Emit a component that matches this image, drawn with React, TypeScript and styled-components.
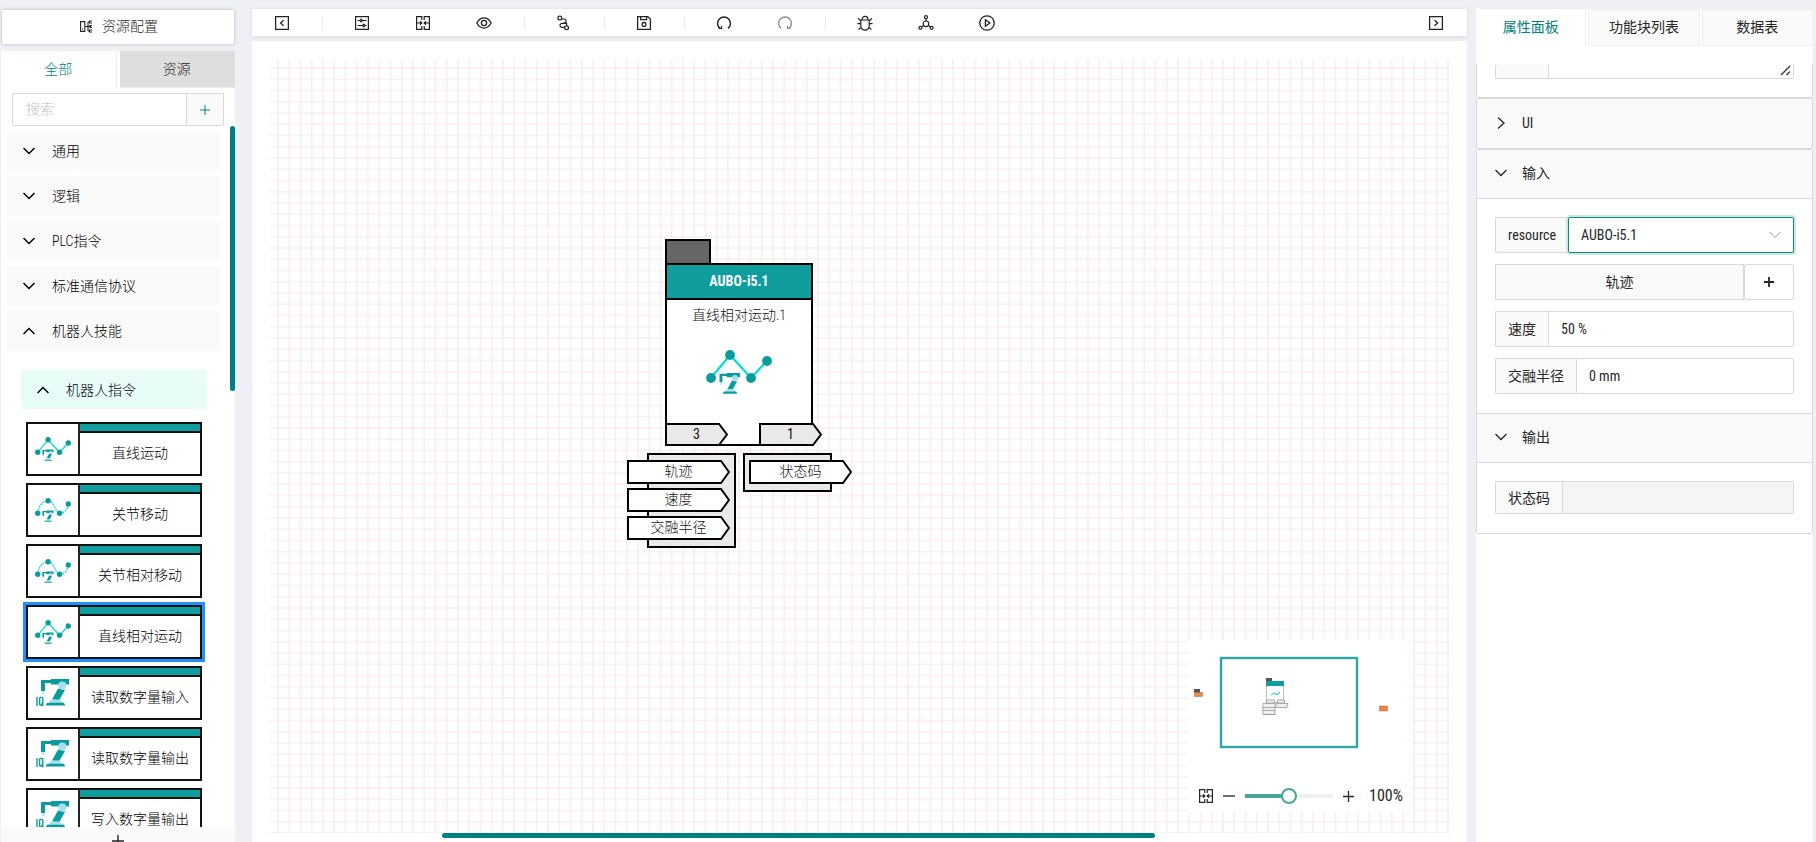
import React from 'react';
import styled, { createGlobalStyle } from 'styled-components';

const teal = '#008080';
const nodeTeal = '#0f9d9d';
const line = '#d9d9d9';
const ink = '#262626';
const sans = '"Roboto Condensed", "Liberation Sans Narrow", "Noto Sans CJK SC", sans-serif';

const GlobalStyle = createGlobalStyle`
  *, *::before, *::after { box-sizing: border-box; }
  body { margin: 0; background: #eff0f5; color: ${ink}; font: 14px/22px ${sans}; overflow: hidden; }
  button, input, select, textarea { font: inherit; color: inherit; margin: 0; }
  button { padding: 0; border: 0; background: none; cursor: pointer; }
  svg { display: block; flex: none; }
`;

/* ---------- page frame ---------- */

const Page = styled.div`
  display: flex;
  height: 100vh;
  padding: 9px 3px 0 1px;
`;

const Sidebar = styled.aside`
  display: flex;
  flex-direction: column;
  flex: none;
  width: 234px;
  margin-right: 17px;
  font-weight: 300;
`;

const Workspace = styled.main`
  display: flex;
  flex-direction: column;
  flex: 1;
  min-width: 0;
  gap: 5px;
  margin-right: 9px;
`;

const Inspector = styled.aside`
  display: flex;
  flex-direction: column;
  flex: none;
  width: 337px;
  background: #fff;
`;

/* ---------- sidebar ---------- */

const ConfigButton = styled.button`
  display: flex;
  align-items: center;
  justify-content: center;
  gap: 9px;
  height: 34px;
  margin: 1px 1px 7px;
  padding: 0 0 2px 2px;
  border-radius: 2px;
  background: #fff;
  box-shadow: 0 0 4px #b9bcc2;
`;

const SideTabs = styled.div`
  display: flex;
  gap: 3px;
  flex: none;
  background: #fff;
`;

const SideTab = styled.button<{ $active?: boolean }>`
  flex: 1;
  height: 37px;
  color: ${p => (p.$active ? teal : ink)};
  background: ${p => (p.$active ? '#fff' : '#dedede')};
  border-right: 1px solid ${p => (p.$active ? '#ececec' : '#dedede')};
  border-bottom: 1px solid ${p => (p.$active ? '#fff' : '#ececec')};
`;

const SideBody = styled.div`
  display: flex;
  flex-direction: column;
  flex: 1;
  min-height: 0;
  padding-top: 5px;
  background: #fff;
`;

const SearchBar = styled.div`
  display: flex;
  flex: none;
  height: 33px;
  margin: 0 11px;
`;

const SearchInput = styled.input`
  flex: 1;
  min-width: 0;
  padding: 0 13px 2px;
  border: 1px solid ${line};
  border-radius: 2px 0 0 2px;
  background: #fff;
  outline: none;
  &::placeholder { color: #bfbfbf; opacity: 1; }
`;

const AddButton = styled.button`
  display: grid;
  place-items: center;
  width: 37px;
  border: 1px solid ${line};
  border-left: 0;
  border-radius: 0 2px 2px 0;
  background: #fafafa;
  color: ${teal};
`;

const LibraryScroll = styled.div`
  display: flex;
  flex: 1;
  min-height: 0;
  overflow: hidden;
`;

const Library = styled.nav`
  flex: 1;
  min-width: 0;
  padding: 5px 9px 0 6px;
`;

const ScrollThumb = styled.div`
  flex: none;
  width: 5px;
  height: 265px;
  border-radius: 3px;
  background: ${teal};
`;

const Group = styled.button<{ $nested?: boolean }>`
  display: flex;
  align-items: center;
  gap: 17px;
  width: 100%;
  height: ${p => (p.$nested ? 39 : 40)}px;
  margin-bottom: 5px;
  padding-left: 16px;
  background: ${p => (p.$nested ? '#e8fdf8' : '#fafafa')};
  color: #000;
`;

const NestedGroup = styled.div`
  padding: 14px 14px 0;
`;

const BlockList = styled.ul`
  display: flex;
  flex-direction: column;
  gap: 7px;
  margin: 13px 5px 0;
  padding: 0;
  list-style: none;
`;

const Block = styled.button<{ $selected?: boolean }>`
  display: flex;
  width: 100%;
  height: 54px;
  border: 2px solid #111;
  background: #fff;
  color: #000;
  box-shadow: ${p => (p.$selected ? '0 0 0 3px #1e90ff' : 'none')};
`;

const BlockIcon = styled.span`
  display: grid;
  place-items: center;
  width: 52px;
  height: 100%;
  border-right: 2px solid #222;
`;

const BlockName = styled.span`
  display: flex;
  align-items: center;
  justify-content: center;
  flex: 1;
  height: 100%;
  padding-top: 8px;
  background: linear-gradient(${nodeTeal} 7px, #111 7px, #111 9px, #fff 9px);
`;

const SideFooter = styled.button`
  display: flex;
  justify-content: center;
  flex: none;
  height: 15px;
  padding-top: 8px;
  overflow: hidden;
  background: #fafafa;
`;

/* ---------- toolbar and canvas ---------- */

const Toolbar = styled.div`
  display: flex;
  align-items: center;
  flex: none;
  height: 27px;
  background: #fff;
  box-shadow: 0 1px 4px #d5d9e0;
`;

const Tool = styled.button<{ $faded?: boolean }>`
  display: flex;
  align-items: center;
  width: 61px;
  height: 27px;
  padding-left: 22px;
  color: #222;
  opacity: ${p => (p.$faded ? 0.5 : 1)};
`;

const ToolDivider = styled.span`
  width: 1px;
  height: 14px;
  margin: 0 9px;
  background: #ebebeb;
`;

const Spacer = styled.span`
  flex: 1;
`;

const Canvas = styled.section`
  position: relative;
  display: flex;
  flex-direction: column;
  flex: 1;
  min-height: 0;
  padding: 18px 18px 0;
  background: #fff;
`;

const Grid = styled.svg`
  width: 100%;
  flex: 1;
  min-height: 0;
`;

const BottomTrack = styled.div`
  display: flex;
  justify-content: center;
  flex: none;
  height: 9px;
  padding-right: 122px;
`;

const BottomThumb = styled.div`
  width: 713px;
  height: 5px;
  border-radius: 3px;
  background: ${teal};
`;

const NodeLayer = styled.div<{ $x: number; $y: number }>`
  position: absolute;
  left: ${p => p.$x}px;
  top: ${p => p.$y}px;
  color: #111;
`;

const NodeTag = styled.div`
  width: 46px;
  height: 26px;
  margin: 0 0 -2px 38px;
  border: 2px solid #000;
  background: #666;
`;

const NodeCard = styled.div`
  display: flex;
  flex-direction: column;
  width: 148px;
  height: 183px;
  margin-left: 38px;
  border: 2px solid #000;
  background: #fff;
  text-align: center;
`;

const NodeTitle = styled.div`
  height: 35px;
  border-bottom: 2px solid #000;
  background: ${nodeTeal};
  color: #fff;
  font-weight: 700;
  line-height: 32px;
`;

const NodeBody = styled.div`
  display: flex;
  flex-direction: column;
  align-items: center;
  flex: 1;
  gap: 24px;
  padding-top: 4px;
  font-weight: 300;
`;

const NodeCounts = styled.div`
  display: flex;
  gap: 31px;
  width: 156px;
  margin: -23px 0 7px 38px;
`;

const PortColumns = styled.div`
  display: flex;
  align-items: flex-start;
  font-weight: 300;
`;

const PortGroup = styled.div<{ $side: 'in' | 'out' }>`
  display: flex;
  flex-direction: column;
  gap: 4px;
  width: 89px;
  margin-left: ${p => (p.$side === 'in' ? 20 : 7)}px;
  padding: 5px 0 6px ${p => (p.$side === 'in' ? 0 : 4)}px;
  border: 2px solid #000;
  background: #ebe8e9;
`;

const PortShape = styled.div<{ $w: number; $pull?: boolean }>`
  position: relative;
  flex: none;
  width: ${p => p.$w}px;
  height: ${p => (p.$w > 80 ? 24 : 23)}px;
  margin-left: ${p => (p.$pull ? -22 : 0)}px;
  line-height: 22px;
  text-align: center;
  svg { position: absolute; inset: 0; }
  span { position: relative; }
`;

/* ---------- minimap ---------- */

const Minimap = styled.div`
  position: absolute;
  right: 54px;
  bottom: 30px;
  display: flex;
  flex-direction: column;
  justify-content: space-between;
  width: 225px;
  height: 172px;
  background: #fff;
`;

const ZoomBar = styled.div`
  display: flex;
  align-items: center;
  height: 22px;
  margin-bottom: 5px;
  padding-left: 10px;
  font-size: 16px;
`;

const ZoomButton = styled.button`
  display: grid;
  place-items: center;
  width: 14px;
  height: 18px;
  margin-left: 8px;
`;

const ZoomSlider = styled.input`
  appearance: none;
  width: 88px;
  height: 16px;
  margin: 0 0 0 9px;
  background: linear-gradient(90deg, #4aa59b 50%, #f0f0f0 50%) center / 100% 4px no-repeat;
  &::-webkit-slider-thumb {
    appearance: none;
    width: 16px;
    height: 16px;
    border: 2px solid #4aa59b;
    border-radius: 50%;
    background: #fff;
  }
`;

const ZoomValue = styled.output`
  margin-left: 14px;
`;

/* ---------- inspector ---------- */

const PanelTabs = styled.div`
  display: flex;
  gap: 2px;
  flex: none;
`;

const PanelTab = styled.button<{ $active?: boolean }>`
  flex: 1;
  height: 37px;
  padding-bottom: 2px;
  border: 1px solid #f0f0f0;
  border-width: ${p => (p.$active ? '0 1px 0 0' : '1px')};
  background: ${p => (p.$active ? '#fff' : '#fafafa')};
  color: ${p => (p.$active ? teal : ink)};
`;

const PanelScroll = styled.div`
  flex: 1;
  min-height: 0;
  margin-top: 18px;
  overflow: hidden;
`;

const Panel = styled.section<{ $cut?: boolean }>`
  border: 1px solid ${line};
  border-top-width: ${p => (p.$cut ? 0 : 1)}px;
  border-radius: ${p => (p.$cut ? '0 0 2px 2px' : '2px')};
`;

const PanelHead = styled.button<{ $open?: boolean }>`
  display: flex;
  align-items: center;
  gap: 15px;
  width: 100%;
  height: 49px;
  padding: 0 18px 2px;
  border-bottom: ${p => (p.$open ? `1px solid ${line}` : 0)};
  background: #fafafa;
`;

const PanelRule = styled.hr`
  height: 1px;
  margin: 0;
  border: 0;
  background: ${line};
`;

const Fields = styled.div`
  display: flex;
  flex-direction: column;
  gap: 11px;
  padding: 18px 18px 19px;
`;

const CutFields = styled(Fields)`
  padding: 0 18px 18px;
`;

const Field = styled.div<{ $h?: number }>`
  position: relative;
  display: flex;
  height: ${p => p.$h ?? 36}px;
`;

const FieldLabel = styled.label<{ $cut?: boolean }>`
  display: flex;
  align-items: center;
  flex: none;
  min-width: 53px;
  padding: 0 12px;
  border: 1px solid ${line};
  border-right: 0;
  border-top-width: ${p => (p.$cut ? 0 : 1)}px;
  border-radius: 2px 0 0 2px;
  background: #fafafa;
`;

const FieldInput = styled.input`
  flex: 1;
  min-width: 0;
  padding: 0 12px;
  border: 1px solid ${line};
  border-radius: 0 2px 2px 0;
  background: #fff;
  outline: none;
  &:disabled { background: #f5f5f5; }
`;

const FieldArea = styled.textarea`
  flex: 1;
  min-width: 0;
  padding: 0;
  border: 1px solid ${line};
  border-top: 0;
  border-radius: 0 0 2px 0;
  resize: none;
  outline: none;
`;

const FieldSelect = styled.select`
  flex: 1;
  min-width: 0;
  padding: 0 12px;
  appearance: none;
  border: 1px solid #0d8a7f;
  border-radius: 2px;
  background: #fff;
  box-shadow: 0 0 0 2px #cde8e5;
  outline: none;
`;

const SelectArrow = styled.span`
  position: absolute;
  right: 13px;
  top: 12px;
  color: #bfbfbf;
  pointer-events: none;
`;

const AreaGrip = styled.span`
  position: absolute;
  right: 3px;
  bottom: 3px;
  color: #444;
  pointer-events: none;
`;

const TrackName = styled.div`
  flex: 1;
  border: 1px solid ${line};
  background: #fafafa;
  line-height: 34px;
  text-align: center;
`;

const TrackAdd = styled.button`
  display: grid;
  place-items: center;
  width: 50px;
  border: 1px solid ${line};
  border-radius: 2px;
  background: #fff;
`;

/* ---------- drawings ---------- */

type IconProps = { size?: number; w?: number; children: React.ReactNode };

const Icon = ({ size = 16, w = 1.3, children }: IconProps) => (
  <svg width={size} height={size} viewBox="0 0 16 16" fill="none" stroke="currentColor" strokeWidth={w}>
    {children}
  </svg>
);

const Chevron = ({ dir, w = 1.5 }: { dir: 'up' | 'down' | 'right'; w?: number }) => (
  <svg width="12" height="12" viewBox="0 0 12 12" fill="none" stroke="currentColor" strokeWidth={w}>
    <path d={{ up: 'M.5 9 6 3.5 11.5 9', down: 'M.5 3 6 8.5 11.5 3', right: 'M3 .5 9 6 3 11.5' }[dir]} />
  </svg>
);

const Plus = ({ size = 10, w = 1 }: { size?: number; w?: number }) => (
  <svg width={size} height={size} viewBox={`0 0 ${size} ${size}`} stroke="currentColor" strokeWidth={w}>
    <path d={`M${size / 2} 0V${size}M0 ${size / 2}H${size}`} />
  </svg>
);

const TreeIcon = () => (
  <svg width="13" height="13" viewBox="0 0 13 13" fill="none" stroke="currentColor" strokeWidth="1.1">
    <path d="M.6 1.6h4.2v9.8H.6zM2 9h1M5 6.5h6M8 2v9M8 2h1M8 11h1M12 1H9.5v2H12M12 5.5H10v2h2M12 10H9.5v2H12" />
  </svg>
);

const SquareLeft = () => (
  <Icon><path d="M1.6 1.6h12.8v12.8H1.6zM9.6 5.2 6.6 8l3 2.8" /></Icon>
);
const SquareRight = () => (
  <Icon><path d="M1.6 1.6h12.8v12.8H1.6zM6.6 5.2l3 2.8-3 2.8" /></Icon>
);
const Sliders = () => (
  <Icon w={1.2}>
    <path d="M1.6 1.6h12.8v12.8H1.6zM3.5 5.5H6M8.5 5.5h4M3.5 10.5h5M11 10.5h1.5M7.2 4.2 8.5 5.5 7.2 6.8 5.9 5.5zM9.8 9.2l1.3 1.3-1.3 1.3-1.3-1.3z" />
  </Icon>
);
const FitView = () => (
  <Icon w={1.2}>
    <path d="M6.8 5V1.6H1.6v12.8h5.2V11M9.2 5V1.6h5.2v12.8H9.2V11M1.6 8h4.8M14.4 8H9.6M5 6.3 6.8 8 5 9.7M11 6.3 9.2 8l1.8 1.7" />
  </Icon>
);
const Eye = () => (
  <Icon>
    <path d="M.9 8C2.6 4.6 5.1 2.9 8 2.9S13.4 4.6 15.1 8C13.4 11.4 10.9 13.1 8 13.1S2.6 11.4.9 8z" />
    <circle cx="8" cy="8" r="2.6" />
  </Icon>
);
const Route = () => (
  <Icon w={1.2}>
    <circle cx="3.8" cy="3" r="1.9" />
    <circle cx="10.6" cy="12.8" r="1.9" />
    <path d="M5.7 4h2.6a2 2 0 0 1 1.4 3.2L7 8.6a2 2 0 0 0-3 2c0 1 .8 1.8 1.8 1.8h2.9M5.6 8.4h5v2.4" />
  </Icon>
);
const Save = () => (
  <Icon>
    <path d="M1.6 1.6h10.2l2.6 2.6v10.2H1.6zM4.6 1.6v3h6v-3" />
    <circle cx="8" cy="9.4" r="1.9" />
  </Icon>
);
const Undo = () => (
  <Icon w={1.4}>
    <path d="M4 13.4A6.4 6.4 0 1 1 12 13.4" />
    <path d="M2.6 13.4h3V11" strokeWidth="1.1" />
  </Icon>
);
const Redo = () => (
  <Icon w={1.4}>
    <path d="M4 13.4A6.4 6.4 0 1 1 12 13.4" />
    <path d="M13.4 13.4h-3V11" strokeWidth="1.1" />
  </Icon>
);
const Bug = () => (
  <Icon w={1.2}>
    <path d="M3.8 5h8.4v6.2a4.2 4 0 0 1-8.4 0zM5 5a3 3.6 0 0 1 6 0M.4 8.6h3.4M12.2 8.6h3.4M1 3.4l2.8 2.4M15 3.4l-2.8 2.4M1.6 14.6l2.6-2.4M14.4 14.6l-2.6-2.4" />
  </Icon>
);
const Network = () => (
  <Icon w={1.2}>
    <circle cx="8" cy="2.2" r="1.5" />
    <circle cx="8" cy="8.8" r="2.8" />
    <circle cx="2.4" cy="12.8" r="1.5" />
    <circle cx="13.6" cy="12.8" r="1.5" />
    <path d="M8 3.7V6M5.6 10.4 3.7 12M10.4 10.4l1.9 1.6" />
  </Icon>
);
const Play = () => (
  <Icon>
    <circle cx="8" cy="8" r="7.2" />
    <path d="M6.4 4.8v6.4L10.8 8z" />
  </Icon>
);

const RobotArm = () => (
  <g>
    <path d="M0 1h10V0h18v5.5H10V4H4v8H0z" fill="#0a9c9c" />
    <path d="M1.3 12h2v3h-2z" fill="#a6dff0" />
    <path d="M17 9.5 24 11 18 21.5 11 20.5z" fill="#0a9c9c" />
    <circle cx="21.3" cy="6.6" r="4" fill="#a6dff0" />
    <path d="M10 20.5h8.5L22 24H8z" fill="#a6dff0" />
    <path d="M6 23.8h17l1.2 2.7H4.6z" fill="#0a9c9c" />
  </g>
);

const MotionIcon = ({ width, curved }: { width: number; curved?: boolean }) => (
  <svg width={width} height={(width * 44) / 66} viewBox="0 0 66 44">
    {curved ? (
      <path
        d="M5 28C6 16 13 5 24 5s12 20 21 23c9 0 16-8 16-17"
        fill="none" stroke="#00dcdc" strokeWidth="2.4" strokeDasharray="3.4 2"
      />
    ) : (
      <path d="M5 28 24 5l21 23 16-17" fill="none" stroke="#00dcdc" strokeWidth="2.2" />
    )}
    <g fill="#0a9c9c">
      <circle cx="5" cy="28" r="4.9" />
      <circle cx="24" cy="5" r="4.9" />
      <circle cx="45" cy="28" r="4.9" />
      <circle cx="61" cy="11" r="4.9" />
    </g>
    <g transform="translate(13.5 23) scale(.73 .78)"><RobotArm /></g>
  </svg>
);

const SignalIcon = () => (
  <svg width="34" height="28" viewBox="0 0 34 28">
    <g transform="translate(5 0)"><RobotArm /></g>
    <g fill="none" stroke="#0a9c9c" strokeWidth="1.4">
      <path d="M1 18v9" />
      <rect x="3.6" y="18.4" width="3.2" height="7.6" rx="1" />
      <path d="M5.4 24.4l1.8 2.8" />
    </g>
  </svg>
);

const Port = ({ w, fill, pull, children }: { w: number; fill: string; pull?: boolean; children: React.ReactNode }) => {
  const h = w > 80 ? 24 : 23;
  return (
    <PortShape $w={w} $pull={pull}>
      <svg width={w} height={h}>
        <path
          d={`M1 1H${w - 9}L${w - 1} ${h / 2}L${w - 9} ${h - 1}H1z`}
          fill={fill} stroke="#000" strokeWidth="2"
        />
      </svg>
      <span>{children}</span>
    </PortShape>
  );
};

const Overview = () => (
  <svg width="225" height="140" viewBox="0 0 225 140">
    <rect x="33" y="18" width="136" height="89" fill="none" stroke="#2ca6a6" strokeWidth="2.4" />
    <rect x="6" y="49" width="6" height="4" fill="#555" />
    <rect x="6.5" y="52.5" width="8" height="4" fill="#ee8648" stroke="#a87045" strokeWidth=".5" />
    <rect x="191.5" y="66" width="8" height="5" fill="#ee8648" stroke="#a87045" strokeWidth=".5" />
    <rect x="78" y="38" width="6" height="4" fill="#555" />
    <rect x="78.5" y="41.5" width="17" height="21" fill="#fff" stroke="#bbb" />
    <rect x="78" y="41" width="18" height="5" fill={nodeTeal} />
    <path d="M83 55l3-2 3 2 3-3" stroke="#00c8c8" fill="none" strokeWidth="1" />
    <g fill="#eee" stroke="#999" strokeWidth=".8">
      <path d="M78.5 60h8v3h-8zM89.5 60h7v3h-7z" />
      <path d="M75 63.5h12v11H75zM88 63.5h12l-1 4H88z" />
      <path d="M74 67.5h13M74 70.5h13M76 74.5h11" />
    </g>
  </svg>
);

/* ---------- data ---------- */

const groups = ['通用', '逻辑', 'PLC指令', '标准通信协议'];

const blocks: { name: string; kind: 'line' | 'joint' | 'signal'; selected?: boolean }[] = [
  { name: '直线运动', kind: 'line' },
  { name: '关节移动', kind: 'joint' },
  { name: '关节相对移动', kind: 'joint' },
  { name: '直线相对运动', kind: 'line', selected: true },
  { name: '读取数字量输入', kind: 'signal' },
  { name: '读取数字量输出', kind: 'signal' },
  { name: '写入数字量输出', kind: 'signal' },
];

const tools: { label: string; icon: React.ReactNode; faded?: boolean }[][] = [
  [{ label: '收起左侧栏', icon: <SquareLeft /> }],
  [
    { label: '设置', icon: <Sliders /> },
    { label: '适应画布', icon: <FitView /> },
    { label: '预览', icon: <Eye /> },
  ],
  [{ label: '路径', icon: <Route /> }],
  [{ label: '保存', icon: <Save /> }],
  [
    { label: '撤销', icon: <Undo /> },
    { label: '重做', icon: <Redo />, faded: true },
  ],
  [
    { label: '调试', icon: <Bug /> },
    { label: '部署', icon: <Network /> },
    { label: '运行', icon: <Play /> },
  ],
];

export default function App() {
  return (
    <Page>
      <GlobalStyle />

      <Sidebar>
        <ConfigButton><TreeIcon />资源配置</ConfigButton>
        <SideTabs>
          <SideTab $active>全部</SideTab>
          <SideTab>资源</SideTab>
        </SideTabs>
        <SideBody>
          <SearchBar>
            <SearchInput placeholder="搜索" aria-label="搜索" />
            <AddButton aria-label="新增"><Plus /></AddButton>
          </SearchBar>
          <LibraryScroll>
            <Library>
              {groups.map(name => (
                <Group key={name}><Chevron dir="down" />{name}</Group>
              ))}
              <Group><Chevron dir="up" />机器人技能</Group>
              <NestedGroup>
                <Group $nested><Chevron dir="up" />机器人指令</Group>
                <BlockList>
                  {blocks.map(b => (
                    <li key={b.name}>
                      <Block $selected={b.selected}>
                        <BlockIcon>
                          {b.kind === 'signal' ? <SignalIcon /> : <MotionIcon width={36} curved={b.kind === 'joint'} />}
                        </BlockIcon>
                        <BlockName>{b.name}</BlockName>
                      </Block>
                    </li>
                  ))}
                </BlockList>
              </NestedGroup>
            </Library>
            <ScrollThumb />
          </LibraryScroll>
          <SideFooter aria-label="添加"><Plus size={12} w={1.4} /></SideFooter>
        </SideBody>
      </Sidebar>

      <Workspace>
        <Toolbar>
          {tools.map((group, i) => (
            <React.Fragment key={i}>
              {i > 0 && <ToolDivider />}
              {group.map(t => (
                <Tool key={t.label} aria-label={t.label} $faded={t.faded}>{t.icon}</Tool>
              ))}
            </React.Fragment>
          ))}
          <Spacer />
          <Tool aria-label="收起右侧栏"><SquareRight /></Tool>
        </Toolbar>

        <Canvas>
          <Grid>
            <defs>
              <pattern
                id="mesh" width="10" height="10" patternUnits="userSpaceOnUse"
                patternTransform="translate(2.375 3.375) scale(1.125)"
              >
                <path d="M5 0v10M0 5h10" stroke="#f7e6e4" fill="none" />
              </pattern>
            </defs>
            <rect width="100%" height="100%" fill="url(#mesh)" />
          </Grid>
          <BottomTrack><BottomThumb /></BottomTrack>

          <NodeLayer $x={375} $y={198}>
            <NodeTag />
            <NodeCard>
              <NodeTitle>AUBO-i5.1</NodeTitle>
              <NodeBody>
                直线相对运动.1
                <MotionIcon width={66} />
              </NodeBody>
            </NodeCard>
            <NodeCounts>
              <Port w={63} fill="#ebe8e9">3</Port>
              <Port w={63} fill="#ebe8e9">1</Port>
            </NodeCounts>
            <PortColumns>
              <PortGroup $side="in">
                <Port w={103} fill="#fff" pull>轨迹</Port>
                <Port w={103} fill="#fff" pull>速度</Port>
                <Port w={103} fill="#fff" pull>交融半径</Port>
              </PortGroup>
              <PortGroup $side="out">
                <Port w={103} fill="#fff">状态码</Port>
              </PortGroup>
            </PortColumns>
          </NodeLayer>

          <Minimap>
            <Overview />
            <ZoomBar>
              <FitView />
              <ZoomButton aria-label="缩小">
                <svg width="12" height="2"><path d="M0 1h12" stroke="#333" strokeWidth="1.4" /></svg>
              </ZoomButton>
              <ZoomSlider type="range" min={0} max={200} defaultValue={100} aria-label="缩放" />
              <ZoomButton aria-label="放大"><Plus size={11} w={1.3} /></ZoomButton>
              <ZoomValue>100%</ZoomValue>
            </ZoomBar>
          </Minimap>
        </Canvas>
      </Workspace>

      <Inspector>
        <PanelTabs>
          <PanelTab $active>属性面板</PanelTab>
          <PanelTab>功能块列表</PanelTab>
          <PanelTab>数据表</PanelTab>
        </PanelTabs>
        <PanelScroll>
          <Panel $cut>
            <CutFields>
              <Field $h={15}>
                <FieldLabel htmlFor="note" $cut />
                <FieldArea id="note" aria-label="备注" />
                <AreaGrip>
                  <svg width="11" height="11" viewBox="0 0 11 11" stroke="currentColor" strokeWidth="1.5">
                    <path d="M1 10 10 1M6.5 10 10 6.5" />
                  </svg>
                </AreaGrip>
              </Field>
            </CutFields>
          </Panel>
          <Panel>
            <PanelHead><Chevron dir="right" w={1.3} />UI</PanelHead>
          </Panel>
          <Panel>
            <PanelHead $open><Chevron dir="down" w={1.3} />输入</PanelHead>
            <Fields>
              <Field>
                <FieldLabel htmlFor="resource">resource</FieldLabel>
                <FieldSelect id="resource" defaultValue="AUBO-i5.1">
                  <option>AUBO-i5.1</option>
                </FieldSelect>
                <SelectArrow><Chevron dir="down" w={1.1} /></SelectArrow>
              </Field>
              <Field>
                <TrackName>轨迹</TrackName>
                <TrackAdd aria-label="添加轨迹"><Plus w={1.8} /></TrackAdd>
              </Field>
              <Field>
                <FieldLabel htmlFor="speed">速度</FieldLabel>
                <FieldInput id="speed" defaultValue="50 %" />
              </Field>
              <Field>
                <FieldLabel htmlFor="blend">交融半径</FieldLabel>
                <FieldInput id="blend" defaultValue="0 mm" />
              </Field>
            </Fields>
            <PanelRule />
            <PanelHead $open><Chevron dir="down" w={1.3} />输出</PanelHead>
            <Fields>
              <Field $h={33}>
                <FieldLabel htmlFor="status">状态码</FieldLabel>
                <FieldInput id="status" disabled />
              </Field>
            </Fields>
          </Panel>
        </PanelScroll>
      </Inspector>
    </Page>
  );
}
